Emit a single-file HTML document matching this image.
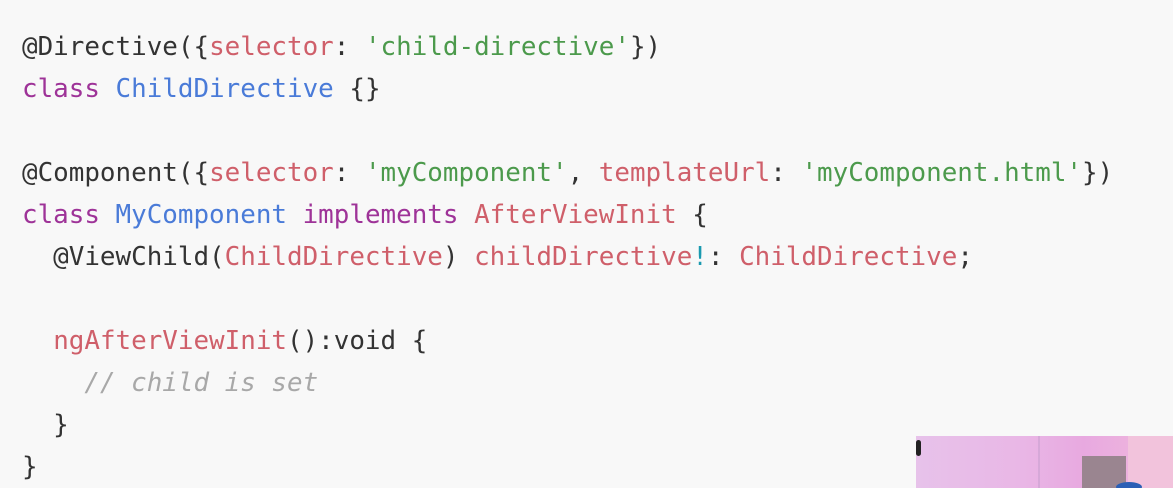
<!DOCTYPE html>
<html><head><style>
html,body{margin:0;padding:0;background:#f8f8f8;width:1173px;height:488px;overflow:hidden;position:relative}
pre{position:absolute;left:22px;top:26px;margin:0;font-family:"DejaVu Sans Mono","Liberation Mono",monospace;font-size:25.9px;line-height:42px;color:#333}
.r{color:#cf5f6a}.g{color:#4c9a4c}.b{color:#4a7bd8}.p{color:#9e3398}.c{color:#a8a8a8;font-style:italic}.t{color:#1a9ab0}
.vid{position:absolute;left:916px;top:436px;width:257px;height:52px;background:linear-gradient(90deg,#e7c2ea 0%,#e9b7e6 40%,#e8a9e0 65%,#f0b9dc 100%)}
</style></head><body>
<pre>@Directive({<span class="r">selector</span>: <span class="g">'child-directive'</span>})
<span class="p">class</span> <span class="b">ChildDirective</span> {}

@Component({<span class="r">selector</span>: <span class="g">'myComponent'</span>, <span class="r">templateUrl</span>: <span class="g">'myComponent.html'</span>})
<span class="p">class</span> <span class="b">MyComponent</span> <span class="p">implements</span> <span class="r">AfterViewInit</span> {
  @ViewChild(<span class="r">ChildDirective</span>) <span class="r">childDirective</span><span class="t">!</span>: <span class="r">ChildDirective</span>;

  <span class="r">ngAfterViewInit</span>():void {
    <span class="c">// child is set</span>
  }
}</pre>
<div class="vid">
<div style="position:absolute;left:0;top:4px;width:5px;height:16px;background:#222;border-radius:3px"></div>
<div style="position:absolute;left:122px;top:0;width:2px;height:52px;background:#d6a8d8"></div>
<div style="position:absolute;left:166px;top:20px;width:44px;height:32px;background:#9a8590"></div>
<div style="position:absolute;left:212px;top:0;width:45px;height:52px;background:#f2c3dc"></div>
<div style="position:absolute;left:200px;top:46px;width:26px;height:10px;background:#2b5fb5;border-radius:50%"></div>
</div>
</body></html>
